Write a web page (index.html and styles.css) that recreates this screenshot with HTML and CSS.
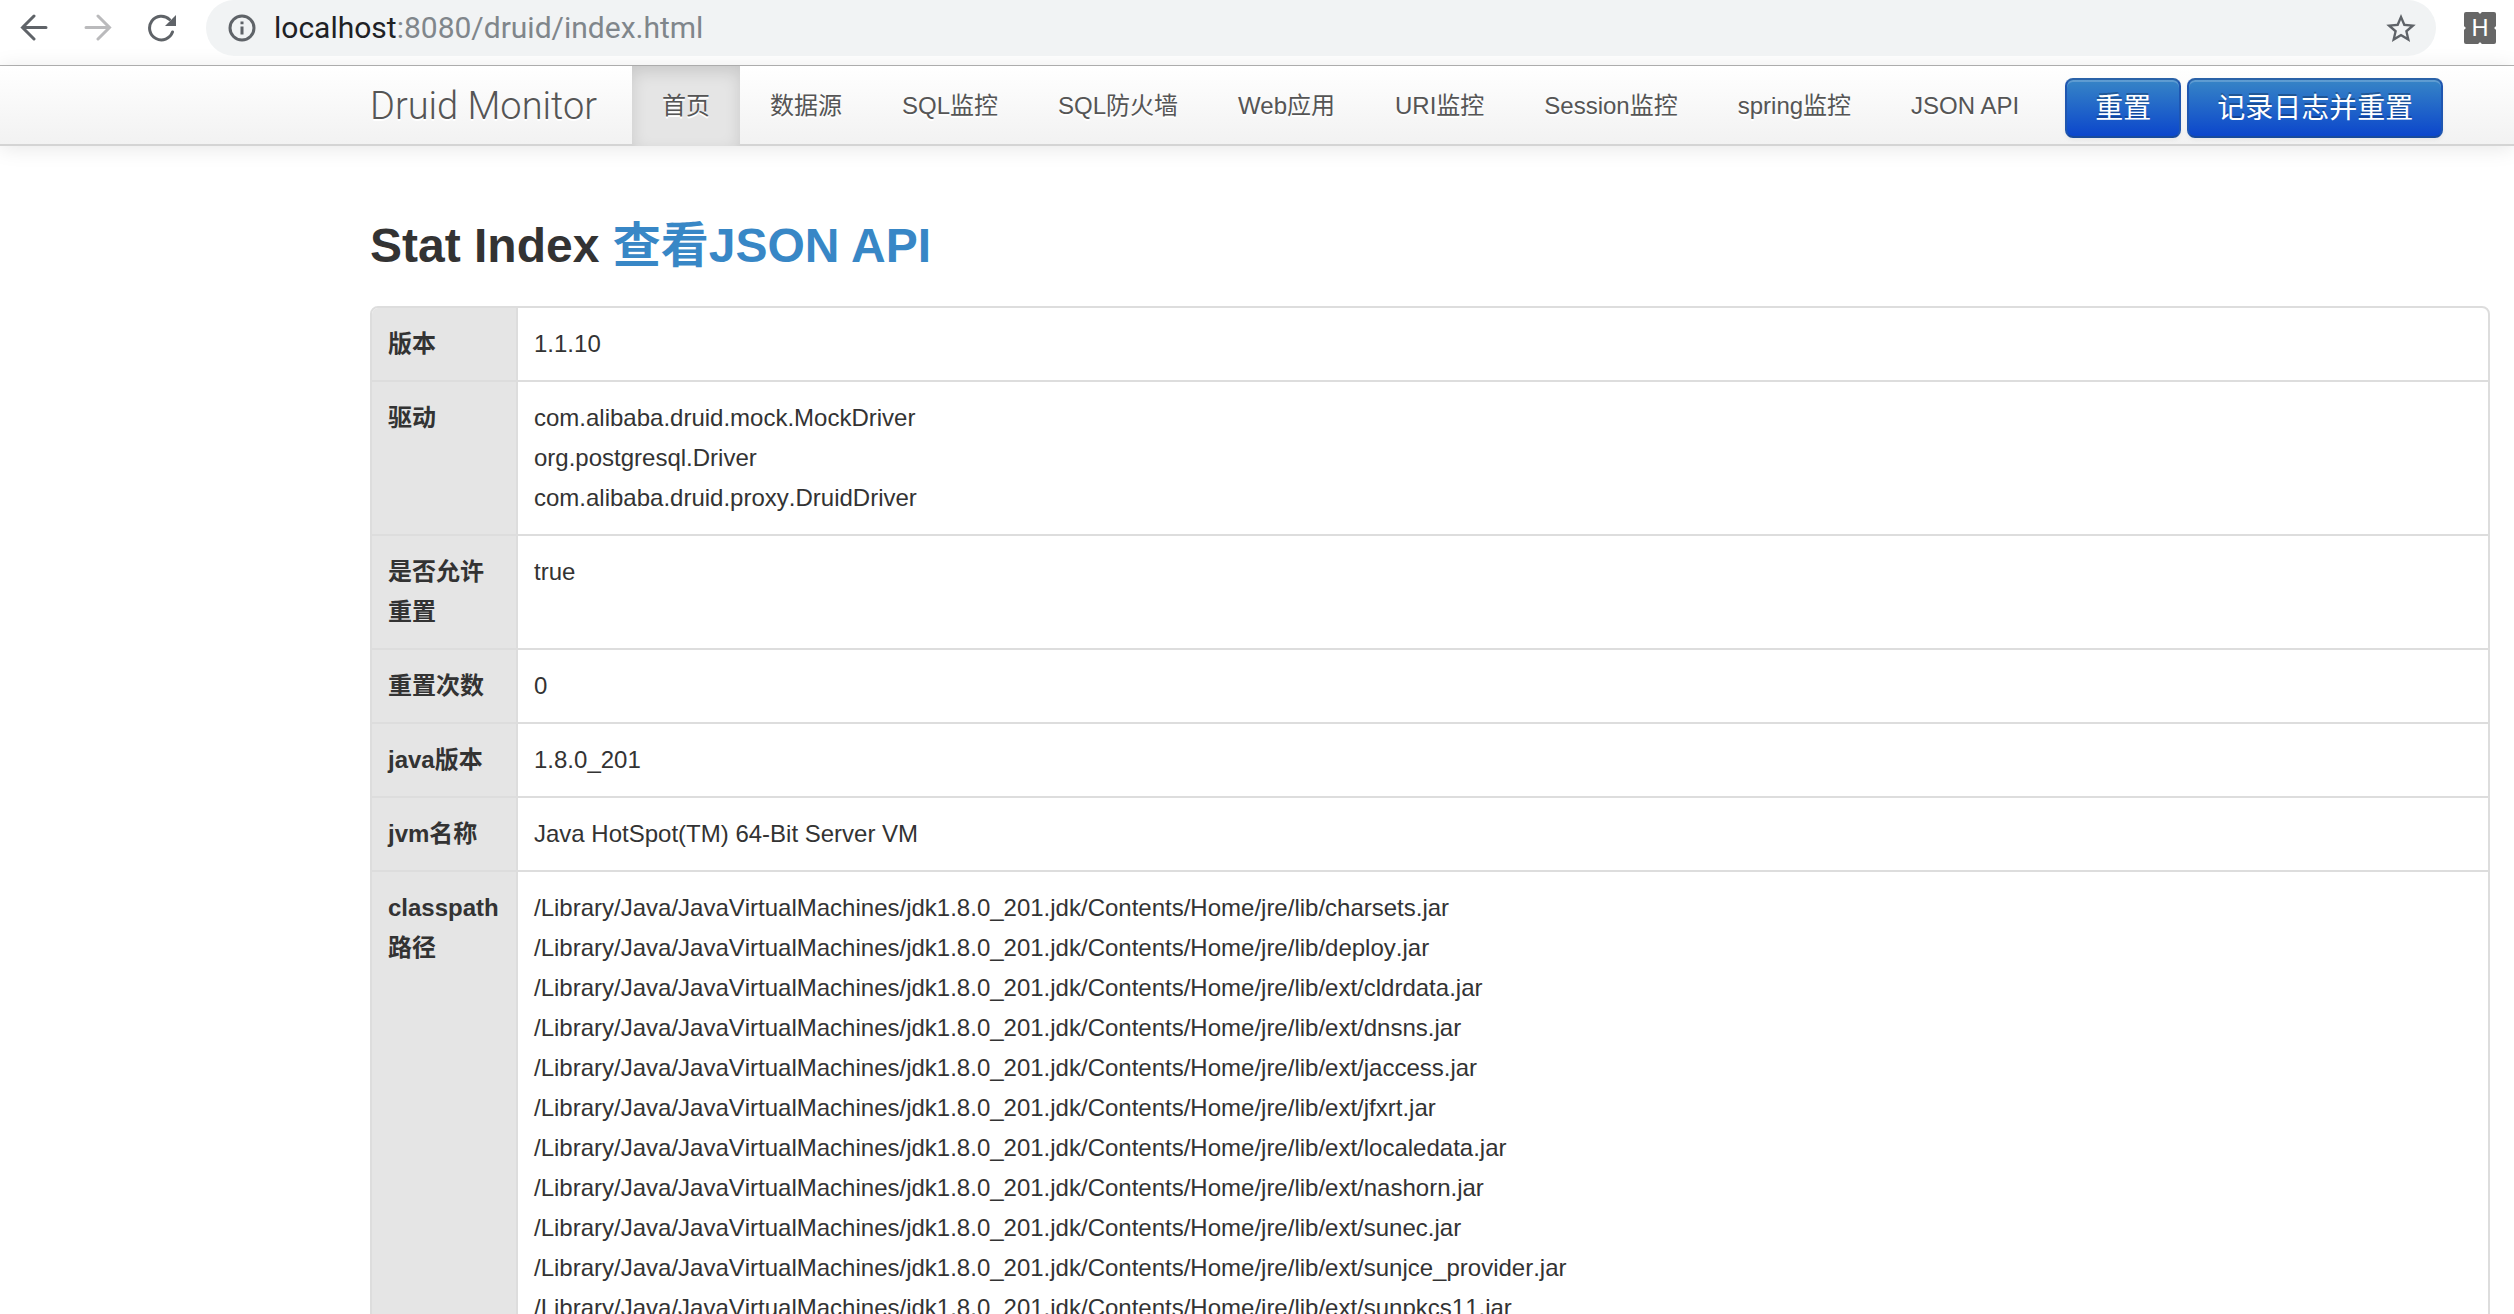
FILE: index.html
```html
<!DOCTYPE html>
<html lang="zh-CN">
<head>
<meta charset="utf-8">
<title>Druid Stat Index</title>
<link rel="stylesheet" href="styles.css">
</head>
<body>
<header class="toolbar">
  <div class="toolbar-nav">
    <button class="icon-btn" type="button" aria-label="Back"><svg viewBox="0 0 28 28"><path d="M26 13.500H2.500M14 2L2.500 13.500L14 25" stroke-linecap="round"/></svg></button>
    <button class="icon-btn is-disabled" type="button" aria-label="Forward"><svg viewBox="0 0 28 28"><path d="M2 13.500H25M14 2L25.500 13.500L14 25" stroke-linecap="round"/></svg></button>
    <button class="icon-btn" type="button" aria-label="Reload"><svg viewBox="0 0 28 28"><path d="M24.500 18A11.800 11.800 0 1 1 21.500 5.500" stroke-linecap="round"/><path class="solid" d="M28 1V12H17Z"/></svg></button>
  </div>
  <div class="address">
    <svg class="info" viewBox="0 0 28 28" aria-hidden="true"><circle cx="14" cy="14" r="12"/><path d="M14 12.500V20.500M14 7.500V10.300"/></svg>
    <div class="url"><span class="host">localhost</span>:8080/druid/index.html</div>
    <button class="icon-btn star" type="button" aria-label="Bookmark"><svg viewBox="2 2 20 19"><path class="solid" d="M22 9.240l-7.190-.62L12 2 9.190 8.630 2 9.240l5.460 4.730L5.820 21 12 17.270 18.180 21l-1.630-7.030L22 9.240zM12 15.400l-3.760 2.270 1-4.280-3.320-2.880 4.380-.38L12 6.100l1.710 4.040 4.380.38-3.320 2.880 1 4.280L12 15.400z"/></svg></button>
  </div>
  <button class="extension" type="button">H</button>
</header>
<nav class="navbar">
  <a class="brand" href="#">Druid Monitor</a>
  <ul class="menu">
    <li><a class="active" href="#">首页</a></li>
    <li><a href="#">数据源</a></li>
    <li><a href="#">SQL监控</a></li>
    <li><a href="#">SQL防火墙</a></li>
    <li><a href="#">Web应用</a></li>
    <li><a href="#">URI监控</a></li>
    <li><a href="#">Session监控</a></li>
    <li><a href="#">spring监控</a></li>
    <li><a href="#">JSON API</a></li>
  </ul>
  <div class="actions">
    <button class="btn" type="button">重置</button>
    <button class="btn" type="button">记录日志并重置</button>
  </div>
</nav>
<main class="content">
  <h3>Stat Index <a href="#">查看JSON API</a></h3>
  <table class="stats">
    <tr><th scope="row">版本</th><td>1.1.10</td></tr>
    <tr><th scope="row">驱动</th><td>com.alibaba.druid.mock.MockDriver<br>org.postgresql.Driver<br>com.alibaba.druid.proxy.DruidDriver</td></tr>
    <tr><th scope="row">是否允许重置</th><td>true</td></tr>
    <tr><th scope="row">重置次数</th><td>0</td></tr>
    <tr><th scope="row">java版本</th><td>1.8.0_201</td></tr>
    <tr><th scope="row">jvm名称</th><td>Java HotSpot(TM) 64-Bit Server VM</td></tr>
    <tr><th scope="row">classpath路径</th><td>/Library/Java/JavaVirtualMachines/jdk1.8.0_201.jdk/Contents/Home/jre/lib/charsets.jar<br>/Library/Java/JavaVirtualMachines/jdk1.8.0_201.jdk/Contents/Home/jre/lib/deploy.jar<br>/Library/Java/JavaVirtualMachines/jdk1.8.0_201.jdk/Contents/Home/jre/lib/ext/cldrdata.jar<br>/Library/Java/JavaVirtualMachines/jdk1.8.0_201.jdk/Contents/Home/jre/lib/ext/dnsns.jar<br>/Library/Java/JavaVirtualMachines/jdk1.8.0_201.jdk/Contents/Home/jre/lib/ext/jaccess.jar<br>/Library/Java/JavaVirtualMachines/jdk1.8.0_201.jdk/Contents/Home/jre/lib/ext/jfxrt.jar<br>/Library/Java/JavaVirtualMachines/jdk1.8.0_201.jdk/Contents/Home/jre/lib/ext/localedata.jar<br>/Library/Java/JavaVirtualMachines/jdk1.8.0_201.jdk/Contents/Home/jre/lib/ext/nashorn.jar<br>/Library/Java/JavaVirtualMachines/jdk1.8.0_201.jdk/Contents/Home/jre/lib/ext/sunec.jar<br>/Library/Java/JavaVirtualMachines/jdk1.8.0_201.jdk/Contents/Home/jre/lib/ext/sunjce_provider.jar<br>/Library/Java/JavaVirtualMachines/jdk1.8.0_201.jdk/Contents/Home/jre/lib/ext/sunpkcs11.jar</td></tr>
  </table>
</main>
</body>
</html>
```
FILE: styles.css
```css
* { box-sizing: border-box; }

body {
  margin: 0;
  background: #fff;
  color: #333;
  font: 24px/40px "Liberation Sans", "Noto Sans CJK SC", sans-serif;
}

button { font: inherit; border: 0; padding: 0; background: none; }
a { color: #3887c6; text-decoration: none; }

/* Browser toolbar */
.toolbar {
  display: flex;
  align-items: flex-start;
  height: 66px;
  padding: 0 18px 0 20px;
  border-bottom: 1px solid #b4b4b4;
}
.toolbar-nav { display: flex; gap: 36px; width: 186px; padding-top: 14px; }
.icon-btn { width: 28px; height: 28px; color: #5f6368; }
.icon-btn.is-disabled { color: #bababc; }
.icon-btn svg, .info { display: block; width: 28px; height: 28px; fill: none; stroke: currentColor; stroke-width: 3; }
.icon-btn.star, .icon-btn.star svg { width: 30px; }
.toolbar .solid { fill: currentColor; stroke: none; }
.address {
  display: flex;
  flex: 1;
  align-items: center;
  height: 56px;
  padding: 0 20px 0 22px;
  border-radius: 28px;
  background: #f1f3f4;
}
.info { color: #5f6368; }
.url { flex: 1; margin-left: 18px; color: #80868b; font-family: Roboto, sans-serif; font-size: 30px; }
.host { color: #202124; }
.extension {
  width: 32px;
  height: 32px;
  margin: 12px 0 0 28px;
  border-radius: 2px;
  background:
    radial-gradient(circle at 50% 0, #fff 1px, transparent 2px),
    radial-gradient(circle at 50% 100%, #fff 1px, transparent 2px),
    radial-gradient(circle at 0 50%, #fff 1px, transparent 2px),
    radial-gradient(circle at 100% 50%, #fff 1px, transparent 2px),
    #676767;
  color: #fff;
  font-family: Roboto, sans-serif;
  line-height: 32px;
}

/* Site navigation */
.navbar {
  display: flex;
  height: 80px;
  padding-left: 370px;
  border-bottom: 2px solid #d4d4d4;
  background: linear-gradient(#fff, #f2f2f2);
  box-shadow: 0 2px 20px rgba(0, 0, 0, .1);
}
.brand {
  width: 262px;
  color: #555;
  font-family: Roboto, sans-serif;
  font-size: 38px;
  font-weight: 300;
  line-height: 80px;
  text-shadow: 0 2px 0 #fff;
}
.menu { display: flex; margin: 0; padding: 0; list-style: none; }
.menu a {
  display: block;
  height: 80px;
  padding: 0 30px;
  color: #555;
  line-height: 80px;
  white-space: nowrap;
  text-shadow: 0 2px 0 #fff;
}
.menu .active { background: #e5e5e5; box-shadow: inset 0 6px 16px rgba(0, 0, 0, .125); }
.actions { display: flex; gap: 6px; padding: 12px 0 0 16px; }
.btn {
  height: 60px;
  padding: 2px 28px 0;
  border: 2px solid;
  border-color: #2a62a8 #1f56b0 #184a9c;
  border-radius: 8px;
  background: linear-gradient(#3887c6, #0a44cc) border-box;
  box-shadow: inset 0 2px 0 rgba(255, 255, 255, .2), 0 2px 4px rgba(0, 0, 0, .05);
  color: #fff;
  font-size: 28px;
  white-space: nowrap;
  text-shadow: 0 -2px 0 rgba(0, 0, 0, .25);
}

/* Statistics */
.content { padding: 60px 24px 40px 370px; }
h3 { margin: 0 0 20px; font-size: 48px; line-height: 80px; }
.stats {
  width: 100%;
  border: 2px solid #ddd;
  border-radius: 8px;
  border-spacing: 0;
  overflow: hidden;
}
.stats th, .stats td { padding: 16px; text-align: left; vertical-align: top; }
.stats th { width: 144px; background: #e5e5e5; }
.stats td { border-left: 2px solid #ddd; font-kerning: none; }
.stats tr + tr > * { border-top: 2px solid #ddd; }
```
